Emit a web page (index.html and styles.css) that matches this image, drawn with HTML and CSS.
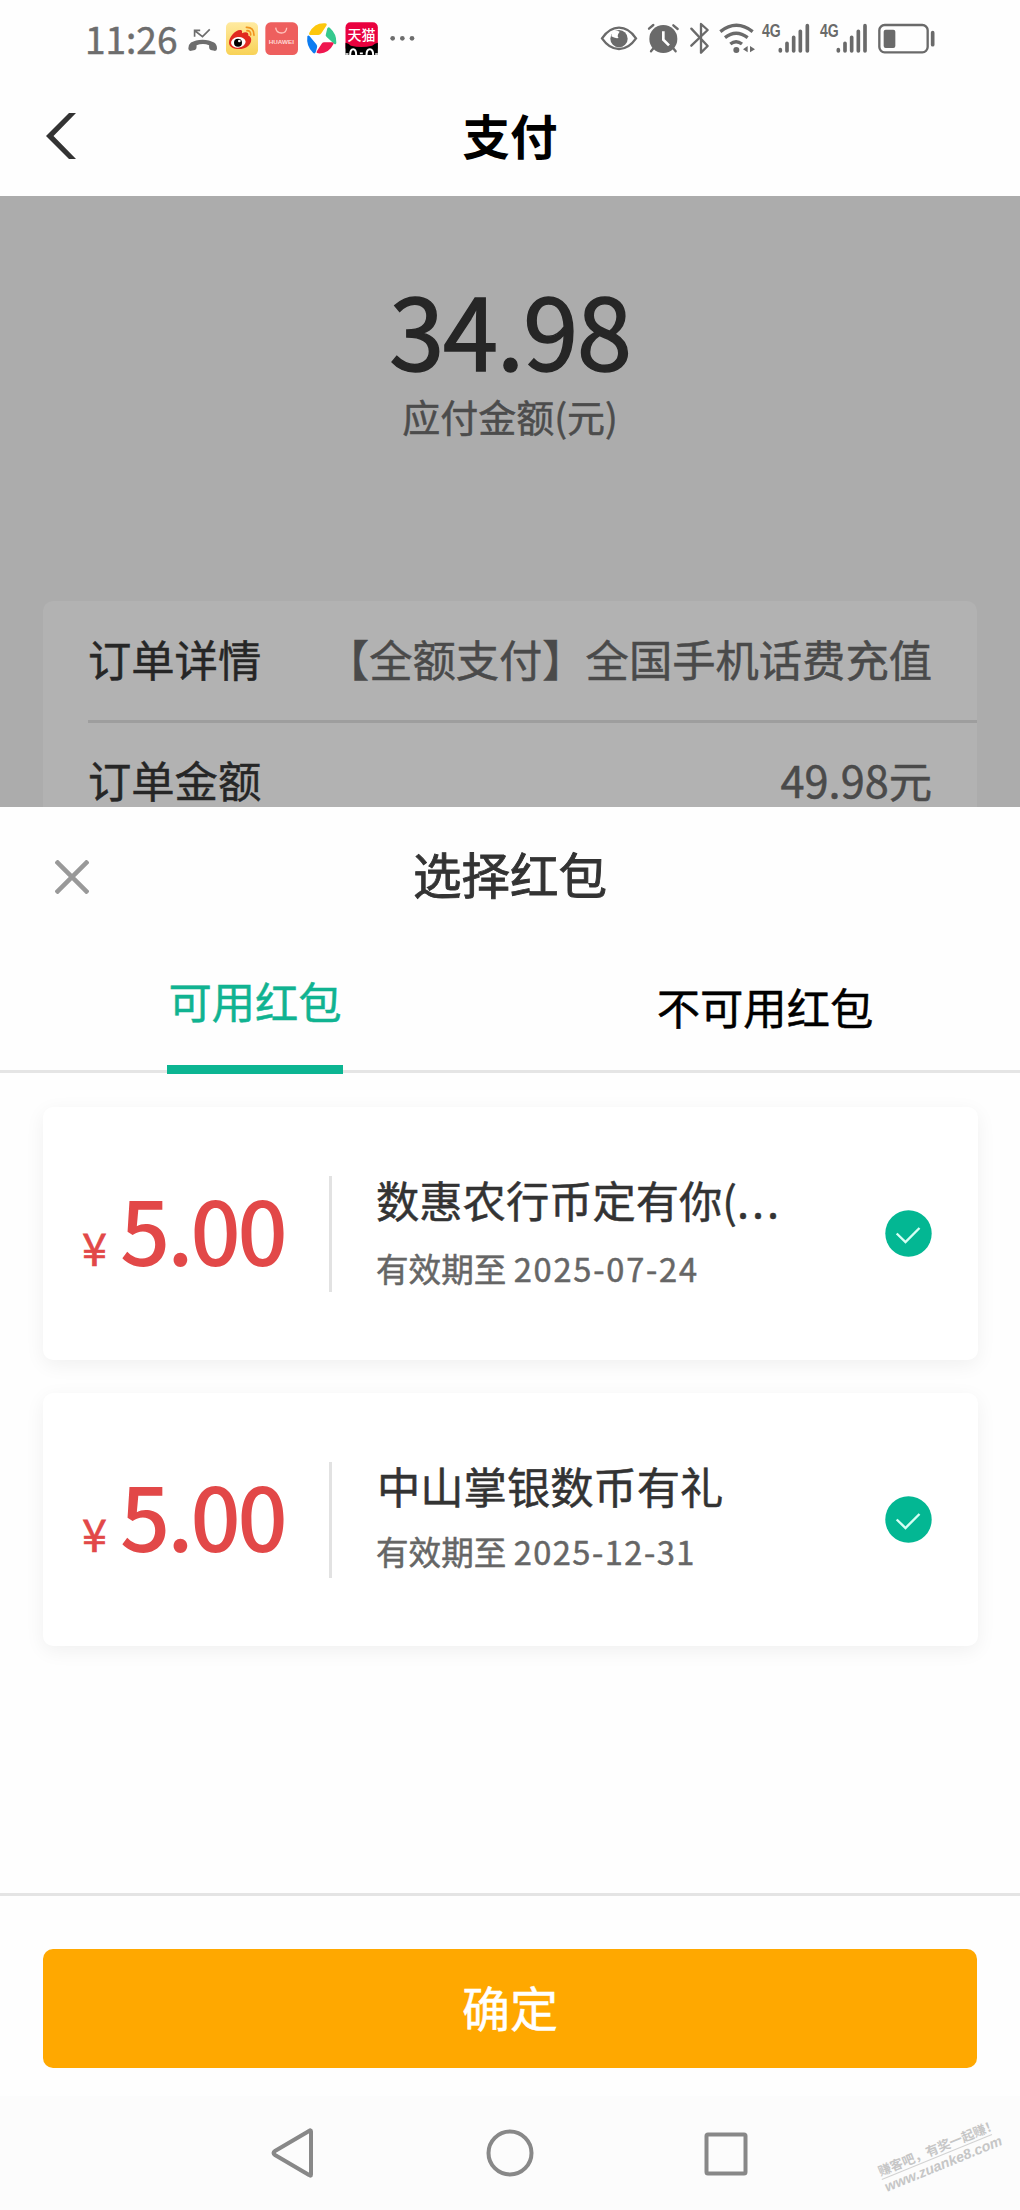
FILE: index.html
```html
<!DOCTYPE html>
<html lang="zh-CN">
<head>
<meta charset="utf-8">
<title>支付</title>
<link rel="stylesheet" href="styles.css">
</head>
<body>
<div class="screen">
  <div class="status">
    <div class="status-left">
      <span class="clock">11:26</span>
      <svg class="ic call" width="31" height="33" viewBox="350 66 94 99"><path d="M354 146q0-12 8-18 14-9 35-9t35 9q9 6 9 18 0 8-8 7l-11-3q-5-2-5-8v-6q-18-8-38 0v6q0 6-5 8l-11 3q-9 1-9-7z" fill="#6d6d6d"/><path d="M373 110V91h17M374 92l23 18 22-22" fill="none" stroke="#6d6d6d" stroke-width="5"/></svg>
      <svg class="ic weibo" width="32" height="33" viewBox="468 66 96 99"><defs><linearGradient id="wb" x2="0" y2="1"><stop offset="0" stop-color="#ffeaa0"/><stop offset="1" stop-color="#f8d257"/></linearGradient></defs><rect x="468" y="67" width="96" height="98" rx="14" fill="url(#wb)"/><path d="M477 128c0-17 19-38 33-38 7 0 7 5 6 10 10-5 21-4 19 7 17 4 10 40-28 40-16 0-30-7-30-19z" fill="#e12a20"/><ellipse cx="505" cy="127" rx="22" ry="16" fill="#fff" transform="rotate(-8 505 127)"/><circle cx="504" cy="128" r="12" fill="#000"/><circle cx="508" cy="123" r="4" fill="#fff"/><path d="M531 92q12 0 11 13M529 82q23-1 23 24" fill="none" stroke="#f0931e" stroke-width="5" stroke-linecap="round"/></svg>
      <svg class="ic huawei" width="33" height="33" viewBox="585 66 99 99"><rect x="586" y="67" width="98" height="98" rx="16" fill="#ee5f5e"/><path d="M617 83q2 16 17 16t16-16" fill="none" stroke="#ffc4bd" stroke-width="4"/><text x="634" y="131" text-anchor="middle" textLength="76" lengthAdjust="spacingAndGlyphs" class="hw">HUAWEI</text></svg>
      <svg class="ic swirl" width="31" height="33" viewBox="707 66 93 99"><path d="M717 98q16-30 47-28 8 1 4 7l-15 23q-3 5-9 5h-22q-8 0-5-7z" fill="#fdc70c"/><path d="M771 85q4-6 8-1 20 18 19 44-1 8-7 3l-22-20q-5-5-2-10z" fill="#35c98e"/><path d="M711 109q3-5 7 0l20 24q4 5 2 10l-4 14q-3 6-8 1-21-19-17-49z" fill="#0d7cf0"/><path d="M754 131q3-4 8-4h23q7 0 4 6-14 29-45 27-8-1-4-7z" fill="#ef174f"/></svg>
      <svg class="ic tmall" width="33" height="33" viewBox="823 66 98 99"><rect x="824" y="67" width="97" height="90" rx="15" fill="#e9013f"/><path d="M824 165v-37q9 1 16 9 32 8 64 0 8-8 17-9v37z" fill="#000"/><text x="872" y="119" text-anchor="middle" class="tm">天猫</text><path d="M838 165q0-17 9-17t9 17M887 165q0-17 10-17t10 17" fill="none" stroke="#fff" stroke-width="6"/><path d="M824 162h9M867 160h9M913 162h8" stroke="#fff" stroke-width="5"/></svg>
      <svg class="ic dots" width="25" height="33" viewBox="958 66 75 99"><g fill="#6d6d6d"><circle cx="966" cy="115" r="7"/><circle cx="995" cy="115" r="7"/><circle cx="1024" cy="115" r="7"/></g></svg>
    </div>
    <div class="status-right">
      <svg class="ic" width="36" height="33" viewBox="62 64 108 99"><path d="M65 113q22-32 51-32t51 32q-22 32-51 32t-51-32z" fill="none" stroke="#6a6a6a" stroke-width="7"/><circle cx="116" cy="114" r="26" fill="#6a6a6a"/><path d="M96 93q12-6 22 0-10 13-3 19-12 2-22-5z" fill="#fff"/></svg>
      <svg class="ic alarm" width="31" height="33" viewBox="203 64 93 99"><circle cx="249" cy="115" r="42" fill="#6a6a6a"/><path d="M206 84l13-11M279 74l13 11M220 142l-8 10M278 142l8 10" stroke="#6a6a6a" stroke-width="7" stroke-linecap="round"/><path d="M249 92v25l17 17" fill="none" stroke="#fff" stroke-width="8"/></svg>
      <svg class="ic bt" width="20" height="33" viewBox="328 64 60 99"><path d="M332 84l49 52-20 20V70l20 18-49 47" fill="none" stroke="#6a6a6a" stroke-width="7" stroke-linecap="round" stroke-linejoin="round"/></svg>
      <svg class="ic wifi" width="36" height="33" viewBox="415 64 108 99"><g fill="none" stroke="#6a6a6a" stroke-width="10"><path d="M419 93q48-38 97 0M433 111q33-26 68 0M449 130q17-14 35 0"/></g><circle cx="467" cy="148" r="9" fill="#6a6a6a"/><path d="M501 136v19l-14-9zM508 136v19l15-9z" fill="#6a6a6a"/></svg>
      <svg class="ic sig" width="48" height="33" viewBox="545 64 144 99"><text transform="translate(545 108) scale(.78 1)" class="net">4G</text><g stroke="#6a6a6a" stroke-width="11" stroke-linecap="round"><path d="M600 147v4M620 128v23M640 110v41M660 92v59M681 75v76"/></g></svg>
      <svg class="ic sig2" width="48" height="33" viewBox="718 64 144 99"><text transform="translate(718 108) scale(.78 1)" class="net">4G</text><g stroke="#6a6a6a" stroke-width="11" stroke-linecap="round"><path d="M773 147v4M793 128v23M813 110v41M833 92v59M853 75v76"/></g></svg>
      <svg class="ic bat" width="57" height="33" viewBox="893 64 171 99"><rect x="897" y="73" width="145" height="82" rx="16" fill="none" stroke="#6a6a6a" stroke-width="7"/><rect x="910" y="87" width="35" height="55" rx="6" fill="#6a6a6a"/><path d="M1057 96v36" stroke="#6a6a6a" stroke-width="11" stroke-linecap="round"/></svg>
    </div>
  </div>

  <header class="nav">
    <svg class="back" width="32" height="48" viewBox="0 0 32 48"><path d="M25 1h7L9.500 24 32 47h-7L2 24z" fill="#333"/></svg>
    <h1>支付</h1>
  </header>

  <main class="pay">
    <div class="amount">34.98</div>
    <div class="amount-label">应付金额(元)</div>
    <section class="order">
      <div class="order-row first"><span>订单详情</span><span class="val">【全额支付】全国手机话费充值</span></div>
      <div class="order-row"><span>订单金额</span><span class="val">49.98元</span></div>
    </section>
  </main>

  <section class="sheet">
    <div class="sheet-head">
      <svg class="close" width="34" height="34" viewBox="0 0 34 34"><path d="M1 1l32 32M33 1L1 33" stroke="#999" stroke-width="4.500"/></svg>
      <h2>选择红包</h2>
    </div>
    <div class="tabs">
      <div class="tab"><span class="active">可用红包</span></div>
      <div class="tab"><span>不可用红包</span></div>
    </div>
    <div class="list">
      <article class="coupon">
        <div class="price"><span class="yen">¥</span><span>5.00</span></div>
        <div class="info">
          <h3>数惠农行币定有你(<span class="more">...</span></h3>
          <p>有效期至 <span class="date">2025-07-24</span></p>
        </div>
        <svg class="check" width="47" height="47" viewBox="0 0 47 47"><circle cx="23.500" cy="23.500" r="23.200" fill="#03b793"/><path d="M11.700 23.500l8.800 8.500 14-14" fill="none" stroke="#d5fff4" stroke-width="2.400"/></svg>
      </article>
      <article class="coupon second">
        <div class="price"><span class="yen">¥</span><span>5.00</span></div>
        <div class="info">
          <h3>中山掌银数币有礼</h3>
          <p>有效期至 <span class="date">2025-12-31</span></p>
        </div>
        <svg class="check" width="47" height="47" viewBox="0 0 47 47"><circle cx="23.500" cy="23.500" r="23.200" fill="#03b793"/><path d="M11.700 23.500l8.800 8.500 14-14" fill="none" stroke="#d5fff4" stroke-width="2.400"/></svg>
      </article>
    </div>
    <div class="action"><button>确定</button></div>
  </section>

  <footer class="sysnav">
    <svg width="44" height="50" viewBox="0 0 44 50"><path d="M40 3.500v43q0 2-2 .5L4 27q-3-2 0-4L38 3q2-1.500 2 .5z" fill="none" stroke="#888" stroke-width="4"/></svg>
    <svg class="home" width="48" height="48" viewBox="0 0 48 48"><circle cx="24" cy="24" r="21.500" fill="none" stroke="#888" stroke-width="4"/></svg>
    <svg class="recent" width="44" height="44" viewBox="0 0 44 44"><rect x="2.500" y="2.500" width="39" height="39" rx="1.500" fill="none" stroke="#888" stroke-width="4"/></svg>
    <div class="mark"><div class="slogan">赚客吧，有奖一起赚！</div><div class="site">www.zuanke8.com</div></div>
  </footer>
</div>
</body>
</html>
```
FILE: styles.css
```css
* { box-sizing: border-box; margin: 0; padding: 0; }
body {
  width: 1020px;
  background: #fefefe;
  font-family: "Noto Sans CJK SC", sans-serif;
  color: #333;
  -webkit-text-stroke: .5px currentColor;
}
h1, h2, h3, button { font-weight: 500; }
.screen { height: 2210px; display: flex; flex-direction: column; overflow: hidden; }

.status { height: 78px; display: flex; justify-content: space-between; padding: 22px 85px 0 85px; }
.status-left, .status-right { display: flex; align-items: flex-start; }
.ic { flex: none; overflow: visible; -webkit-text-stroke: 0; }
.clock { width: 102px; font-size: 37px; line-height: 32px; color: #6d6d6d; }
.weibo { margin-left: 8px; }
.huawei { margin-left: 7px; }
.swirl { margin-left: 8px; }
.tmall { margin-left: 8px; }
.dots { margin-left: 12px; }
.hw { font: 700 17px "Liberation Sans", sans-serif; fill: #ffd9d4; }
.tm { font: 500 42px "Noto Sans CJK SC", sans-serif; fill: #fff; }
.net { font: 700 54px "Liberation Sans", sans-serif; font-size: 54px; fill: #6a6a6a; }
.alarm, .bt { margin-left: 11px; }
.wifi { margin-left: 9px; }
.sig { margin-left: 7px; }
.sig2 { margin-left: 10px; }
.bat { margin-left: 10px; }

.nav { height: 118px; display: grid; grid-template-columns: 120px 1fr 120px; }
.back { margin: 34px 0 0 44px; }
.nav h1 { font-size: 47.500px; font-weight: 700; line-height: 114px; text-align: center; color: #000; -webkit-text-stroke: 0; }

.pay { height: 611px; padding: 83px 43px 0; background: #acacac; overflow: hidden; }
.amount { font-size: 99px; line-height: 98px; letter-spacing: -1.200px; text-align: center; color: #262626; -webkit-text-stroke: 1.500px #262626; }
.amount-label { margin-top: 19px; font-size: 38px; line-height: 40px; text-align: center; color: #4c4c4c; }
.order { margin-top: 165px; height: 240px; padding-left: 45px; border-radius: 10px; background: #b2b2b2; }
.order-row { height: 111px; padding-right: 45px; display: flex; justify-content: space-between; align-items: center; font-size: 43.300px; line-height: 50px; color: #262626; }
.order-row.first { height: 122px; padding-bottom: 6px; border-bottom: 3px solid #9e9e9e; }
.order-row .val { color: #4a4a4a; }

.sheet { height: 1289px; display: flex; flex-direction: column; }
.sheet-head { height: 132px; display: grid; grid-template-columns: 120px 1fr 120px; }
.close { margin: 53px 0 0 55px; }
.sheet-head h2 { font-size: 48.500px; font-weight: 400; line-height: 132px; text-align: center; -webkit-text-stroke: .9px #333; }
.tabs { height: 134px; display: grid; grid-template-columns: 1fr 1fr; border-bottom: 3px solid #e5e5e5; }
.tab { display: flex; justify-content: center; font-size: 43.300px; line-height: 134px; color: #000; }
.active { width: 176px; height: 135px; text-align: center; line-height: 122px; color: #10b391; border-bottom: 9px solid #0cb592; }

.list { flex: 1; padding: 34px 42px 0 43px; display: flex; flex-direction: column; gap: 33px; }
.coupon { height: 253px; display: flex; align-items: center; border-radius: 10px; background: #fff; box-shadow: 0 5px 20px rgba(0, 0, 0, .06); }
.price { height: 116px; width: 289px; padding: 7px 0 0 39px; display: flex; align-items: baseline; gap: 13px; border-right: 3px solid #e2e2e2; font-size: 88px; font-weight: 500; line-height: 90px; letter-spacing: -3px; color: #e24848; -webkit-text-stroke: 0; }
.yen { width: 25px; font-size: 45px; line-height: 43px; letter-spacing: 0; font-weight: 400; -webkit-text-stroke: .6px #e24848; }
.info { align-self: flex-start; padding: 67px 0 0 44px; }
.info h3 { font-size: 43.300px; font-weight: 400; line-height: 50px; }
.more { letter-spacing: 3px; }
.info p { margin-top: 24px; font-size: 32.600px; line-height: 40px; color: #666; }
.second .info h3 { padding-left: 1px; }
.second .info p { margin-top: 21px; }
.date { letter-spacing: 1.800px; }
.second .date { letter-spacing: 1.500px; }
.check { margin: 0 46px 0 auto; }

.action { height: 203px; padding: 53px 43px 0; border-top: 3px solid #e4e4e4; }
.action button { width: 100%; height: 119px; padding-bottom: 5px; border: 0; border-radius: 10px; background: #ffa800; color: #fff; font: 400 48px "Noto Sans CJK SC", sans-serif; -webkit-text-stroke: .5px #fff; }

.sysnav { position: relative; flex: 1; display: flex; align-items: flex-start; padding: 32px 0 0 271px; background: #fcfcfc; }
.home { margin: 1px 0 0 171px; }
.recent { margin: 4px 0 0 170px; }
.mark { position: absolute; left: 882px; top: 68px; width: 125px; transform-origin: 0 16px; transform: rotate(-22.200deg); color: #c6c6c6; white-space: nowrap; -webkit-text-stroke: 0; }
.slogan { height: 16px; width: 119px; border-bottom: 1px solid #d2d2d2; font-size: 12.800px; line-height: 14px; font-weight: 700; }
.site { font: italic 700 14.200px/17px "Liberation Sans", sans-serif; }
```
